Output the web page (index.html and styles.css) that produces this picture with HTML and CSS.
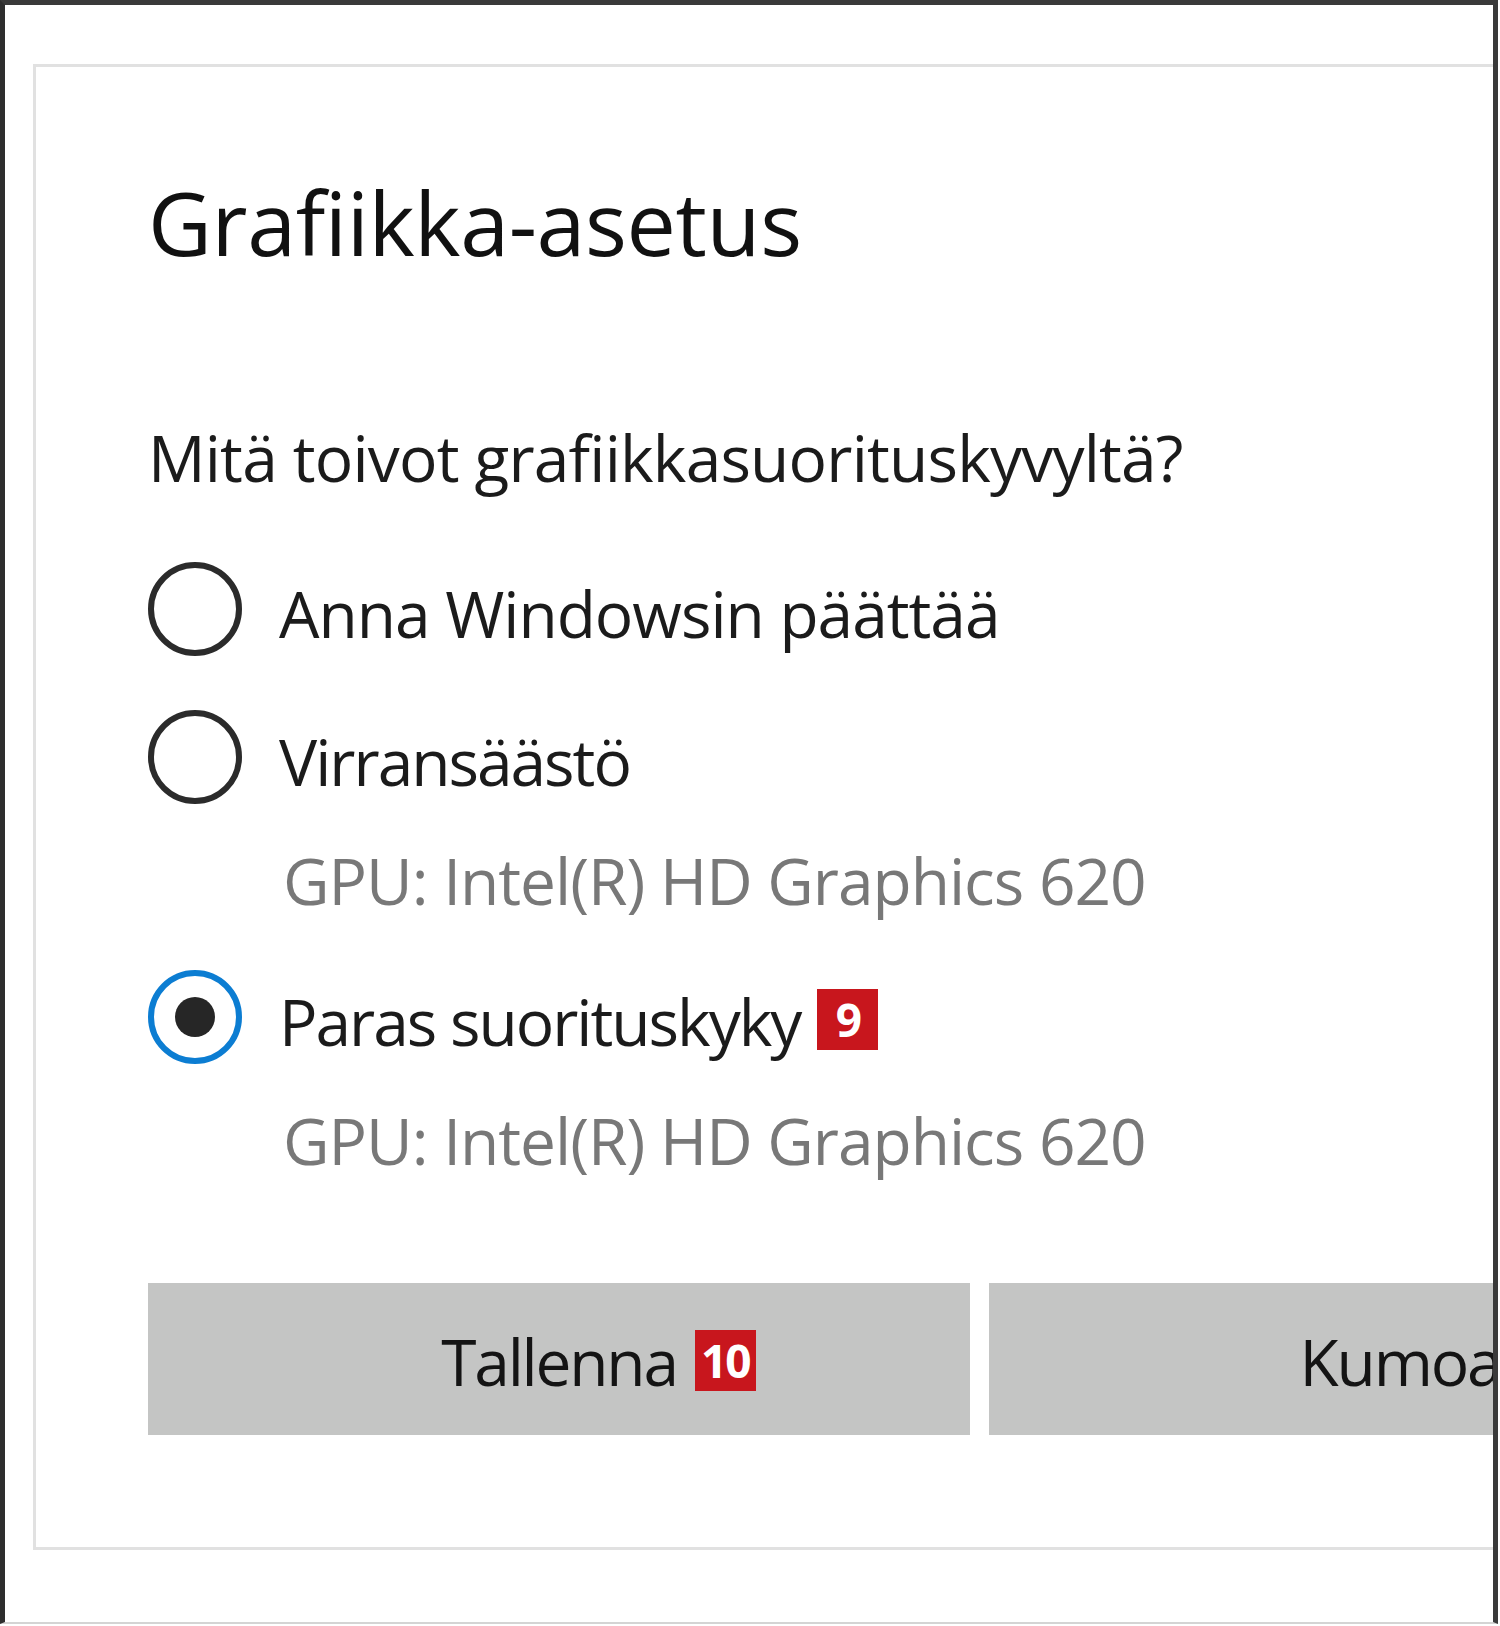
FILE: index.html
```html
<!DOCTYPE html>
<html lang="fi">
<head>
    <meta charset="UTF-8">
    <title>Grafiikka-asetus</title>
    <link rel="stylesheet" href="styles.css">
</head>
<body>
    <div class="window">
        <div class="panel">
            <h1 class="title">Grafiikka-asetus</h1>

            <p class="question">Mitä toivot grafiikkasuorituskyvyltä?</p>

            <div class="options">
                <div class="option">
                    <div class="option-main">
                        <span class="radio"></span>
                        <span class="option-label">Anna Windowsin päättää</span>
                    </div>
                </div>

                <div class="option">
                    <div class="option-main">
                        <span class="radio"></span>
                        <span class="option-label tight">Virransäästö</span>
                    </div>
                    <div class="option-sub">GPU: Intel(R) HD Graphics 620</div>
                </div>

                <div class="option">
                    <div class="option-main">
                        <span class="radio checked"></span>
                        <span class="option-label tight">Paras suorituskyky<span class="badge">9</span></span>
                    </div>
                    <div class="option-sub">GPU: Intel(R) HD Graphics 620</div>
                </div>
            </div>

            <div class="actions">
                <button type="button" class="btn"><span class="btn-text">Tallenna<span class="badge">10</span></span></button>
                <button type="button" class="btn"><span class="btn-text">Kumoa</span></button>
            </div>
        </div>
    </div>
</body>
</html>
```
FILE: styles.css
```css
body {
    margin: 0;
    background-color: #fff;
    font-family: 'Open Sans', 'Noto Sans', sans-serif;
    color: #1b1b1b;
}

.window {
    width: 1498px;
    height: 1624px;
    box-sizing: border-box;
    border-top: 5px solid #3a3a3a;
    border-left: 5px solid #2e2e2e;
    border-right: 5px solid #3a3a3a;
    border-bottom: 2px solid #d4d4d4;
    overflow: hidden;
}

.panel {
    width: 1900px;
    height: 1486px;
    box-sizing: border-box;
    margin: 59px 0 0 28px;
    padding-left: 112px;
    border: 3px solid #e1e1e1;
}

.title {
    margin: 105px 0 0;
    font-size: 88px;
    font-weight: normal;
    line-height: 100px;
    letter-spacing: -0.4px;
    color: #111;
}

.question {
    margin: 146px 0 0;
    font-size: 64px;
    line-height: 80px;
    letter-spacing: -0.8px;
}

.options {
    margin-top: 64px;
}

.option + .option {
    margin-top: 49px;
}

.option-main {
    display: flex;
    align-items: flex-start;
}

.radio {
    flex: none;
    width: 94px;
    height: 94px;
    box-sizing: border-box;
    border: 6px solid #2b2b2b;
    border-radius: 50%;
    display: flex;
    align-items: center;
    justify-content: center;
}

.radio.checked {
    border-color: #0c7dd2;
}

.radio.checked::after {
    content: "";
    width: 40px;
    height: 40px;
    border-radius: 50%;
    background-color: #262626;
}

.option-label {
    position: relative;
    margin-left: 37px;
    padding-top: 5px;
    font-size: 64px;
    line-height: 94px;
    letter-spacing: -1px;
    white-space: nowrap;
}

.option-label.tight {
    letter-spacing: -2px;
}

.option-sub {
    margin-top: 32px;
    padding-left: 135px;
    font-size: 64px;
    line-height: 80px;
    letter-spacing: -1px;
    color: #787878;
}

.actions {
    margin-top: 102px;
    display: grid;
    grid-template-columns: 822px 822px;
    gap: 19px;
}

.btn {
    height: 152px;
    padding: 6px 0 0;
    border: none;
    background-color: #c4c5c4;
    font-family: inherit;
    color: #141414;
    display: flex;
    align-items: center;
    justify-content: center;
}

.btn-text {
    position: relative;
    font-size: 64px;
    line-height: 80px;
    letter-spacing: -2.2px;
}

.badge {
    position: absolute;
    left: calc(100% + 17px);
    width: 61px;
    height: 61px;
    background-color: #c8161d;
    color: #fff;
    font-size: 46px;
    font-weight: bold;
    line-height: 61px;
    letter-spacing: -2px;
    text-align: center;
}

.option-label .badge {
    top: 19px;
}

.btn-text .badge {
    top: 8px;
    left: calc(100% + 18px);
}
```
